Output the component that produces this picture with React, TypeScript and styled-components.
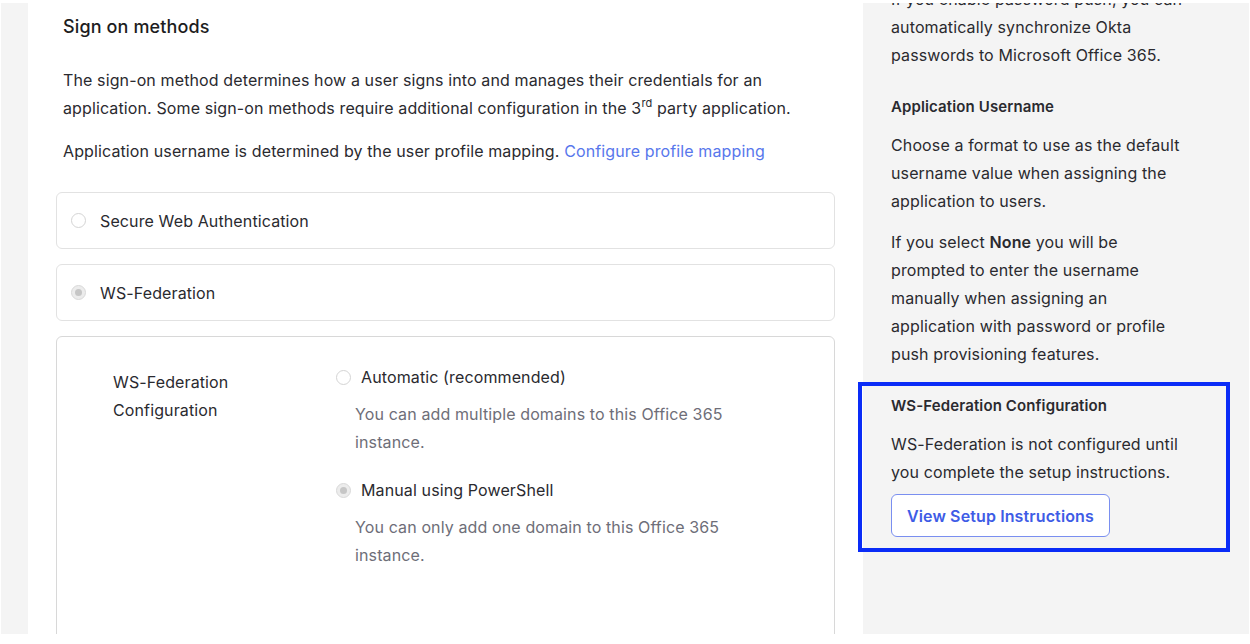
import React from "react";
import styled, { createGlobalStyle } from "styled-components";

const GlobalStyle = createGlobalStyle`
  * { box-sizing: border-box; }
  html, body { margin: 0; padding: 0; background: #fff; }
  body {
    font-family: Inter, "Noto Sans", "Liberation Sans", sans-serif;
    color: #2a2a2f;
    letter-spacing: 0.12px;
    -webkit-font-smoothing: antialiased;
  }
`;

const Radio: React.FC<{ checked?: boolean }> = ({ checked }) => (
  <StyledRadio $checked={checked}>{checked && <RadioDot />}</StyledRadio>
);

const Option: React.FC<{ label: string; hint: string; checked?: boolean }> = ({
  label,
  hint,
  checked,
}) => (
  <StyledOption>
    <OptionRow>
      <Radio checked={checked} />
      <span>{label}</span>
    </OptionRow>
    <OptionHint>{hint}</OptionHint>
  </StyledOption>
);

const App: React.FC = () => {
  return (
    <>
      <GlobalStyle />
      <Page>
        <Frame>
          <Gutter />
          <Main>
            <Title>Sign on methods</Title>
            <Intro>
              <p>
                The sign-on method determines how a user signs into and manages their
                credentials for an application. Some sign-on methods require additional
                configuration in the 3<sup>rd</sup> party application.
              </p>
              <p>
                Application username is determined by the user profile mapping.{" "}
                <Link href="#">Configure profile mapping</Link>
              </p>
            </Intro>
            <CardList>
              <MethodCard>
                <Radio />
                <span>Secure Web Authentication</span>
              </MethodCard>
              <MethodCard>
                <Radio checked />
                <span>WS-Federation</span>
              </MethodCard>
              <ConfigCard>
                <ConfigLabel>WS-Federation Configuration</ConfigLabel>
                <Options>
                  <Option
                    label="Automatic (recommended)"
                    hint="You can add multiple domains to this Office 365 instance."
                  />
                  <Option
                    checked
                    label="Manual using PowerShell"
                    hint="You can only add one domain to this Office 365 instance."
                  />
                </Options>
              </ConfigCard>
            </CardList>
          </Main>
          <Side>
            <SideText>
              If you enable password push, you can automatically synchronize Okta
              passwords to Microsoft Office 365.
            </SideText>
            <SideSection>
              <SideHeading>Application Username</SideHeading>
              <SideText>
                Choose a format to use as the default username value when assigning the
                application to users.
              </SideText>
              <SideText>
                If you select <b>None</b> you will be prompted to enter the username
                manually when assigning an application with password or profile push
                provisioning features.
              </SideText>
            </SideSection>
            <Highlight>
              <SideHeading>WS-Federation Configuration</SideHeading>
              <SideText>
                WS-Federation is not configured until you complete the setup
                instructions.
              </SideText>
              <OutlineButton>View Setup Instructions</OutlineButton>
            </Highlight>
          </Side>
        </Frame>
      </Page>
    </>
  );
};

const Page = styled.div`
  padding: 3px 1px 10px 1px;
`;

const Frame = styled.div`
  display: flex;
  height: 631px;
  overflow: hidden;
  background: #f4f4f4;
`;

const Gutter = styled.div`
  flex: none;
  width: 27px;
`;

const Main = styled.main`
  flex: none;
  width: 835px;
  background: #fff;
  padding: 12px 28px 0;
`;

const Title = styled.h2`
  margin: 0;
  padding-left: 7px;
  font-size: 18px;
  line-height: 24px;
  font-weight: 500;
  color: #1d1d21;
`;

const Intro = styled.div`
  margin-top: 27px;
  padding-left: 7px;
  font-size: 16px;
  line-height: 28px;

  p {
    margin: 0;
  }
  p + p {
    margin-top: 15px;
  }
  sup {
    font-size: 11px;
    line-height: 0;
    vertical-align: 7px;
  }
`;

const Link = styled.a`
  color: #5877ec;
  text-decoration: none;
`;

const CardList = styled.div`
  margin-top: 27px;
  display: flex;
  flex-direction: column;
  gap: 15px;
`;

const MethodCard = styled.div`
  display: flex;
  align-items: center;
  gap: 14px;
  height: 57px;
  padding-left: 14px;
  border: 1px solid #e2e2e2;
  border-radius: 6px;
  font-size: 16px;
`;

const ConfigCard = styled.div`
  display: grid;
  grid-template-columns: 170px 1fr;
  column-gap: 53px;
  align-items: start;
  height: 400px;
  padding: 31px 0 0 56px;
  border: 1px solid #d8d8d8;
  border-radius: 6px;
`;

const ConfigLabel = styled.div`
  font-size: 16px;
  line-height: 28px;
`;

const Options = styled.div`
  margin-top: -3px;
  display: flex;
  flex-direction: column;
  gap: 22px;
`;

const StyledOption = styled.div`
  display: flex;
  flex-direction: column;
`;

const OptionRow = styled.div`
  display: flex;
  align-items: center;
  gap: 10px;
  font-size: 16px;
  line-height: 24px;
`;

const OptionHint = styled.div`
  margin: 11px 0 0 19px;
  max-width: 400px;
  font-size: 16px;
  line-height: 28px;
  color: #6e6e78;
`;

const StyledRadio = styled.span<{ $checked?: boolean }>`
  flex: none;
  width: 15px;
  height: 15px;
  border-radius: 50%;
  display: flex;
  align-items: center;
  justify-content: center;
  border: 1px solid ${(p) => (p.$checked ? "#d9d9d9" : "#d4d4d4")};
  background: ${(p) => (p.$checked ? "#ececec" : "#fff")};
`;

const RadioDot = styled.span`
  width: 7px;
  height: 7px;
  border-radius: 50%;
  background: #c6c6c6;
`;

const Side = styled.aside`
  flex: none;
  width: 386px;
  padding: 0 28px;
  margin-top: -18px;
`;

const SideText = styled.p`
  margin: 0;
  width: 298px;
  font-size: 16px;
  line-height: 28px;

  & + & {
    margin-top: 13px;
  }
  b {
    font-weight: 600;
  }
`;

const SideSection = styled.section`
  margin-top: 26px;
`;

const SideHeading = styled.h3`
  margin: 0 0 12px;
  font-size: 15px;
  line-height: 24px;
  font-weight: 600;
  color: #2a2a2f;
`;

const Highlight = styled.section`
  position: relative;
  margin: 14px 0 0 -33px;
  width: 372px;
  padding: 8px 37px 11px 29px;
  border: 4px solid #0a2cf7;
`;

const OutlineButton = styled.button`
  margin-top: 8px;
  height: 43px;
  padding: 0 15px;
  background: #fff;
  border: 1px solid #7a8ff0;
  border-radius: 6px;
  font-family: inherit;
  font-size: 16px;
  font-weight: 600;
  letter-spacing: 0.12px;
  color: #3e5ce6;
`;

export default App;
